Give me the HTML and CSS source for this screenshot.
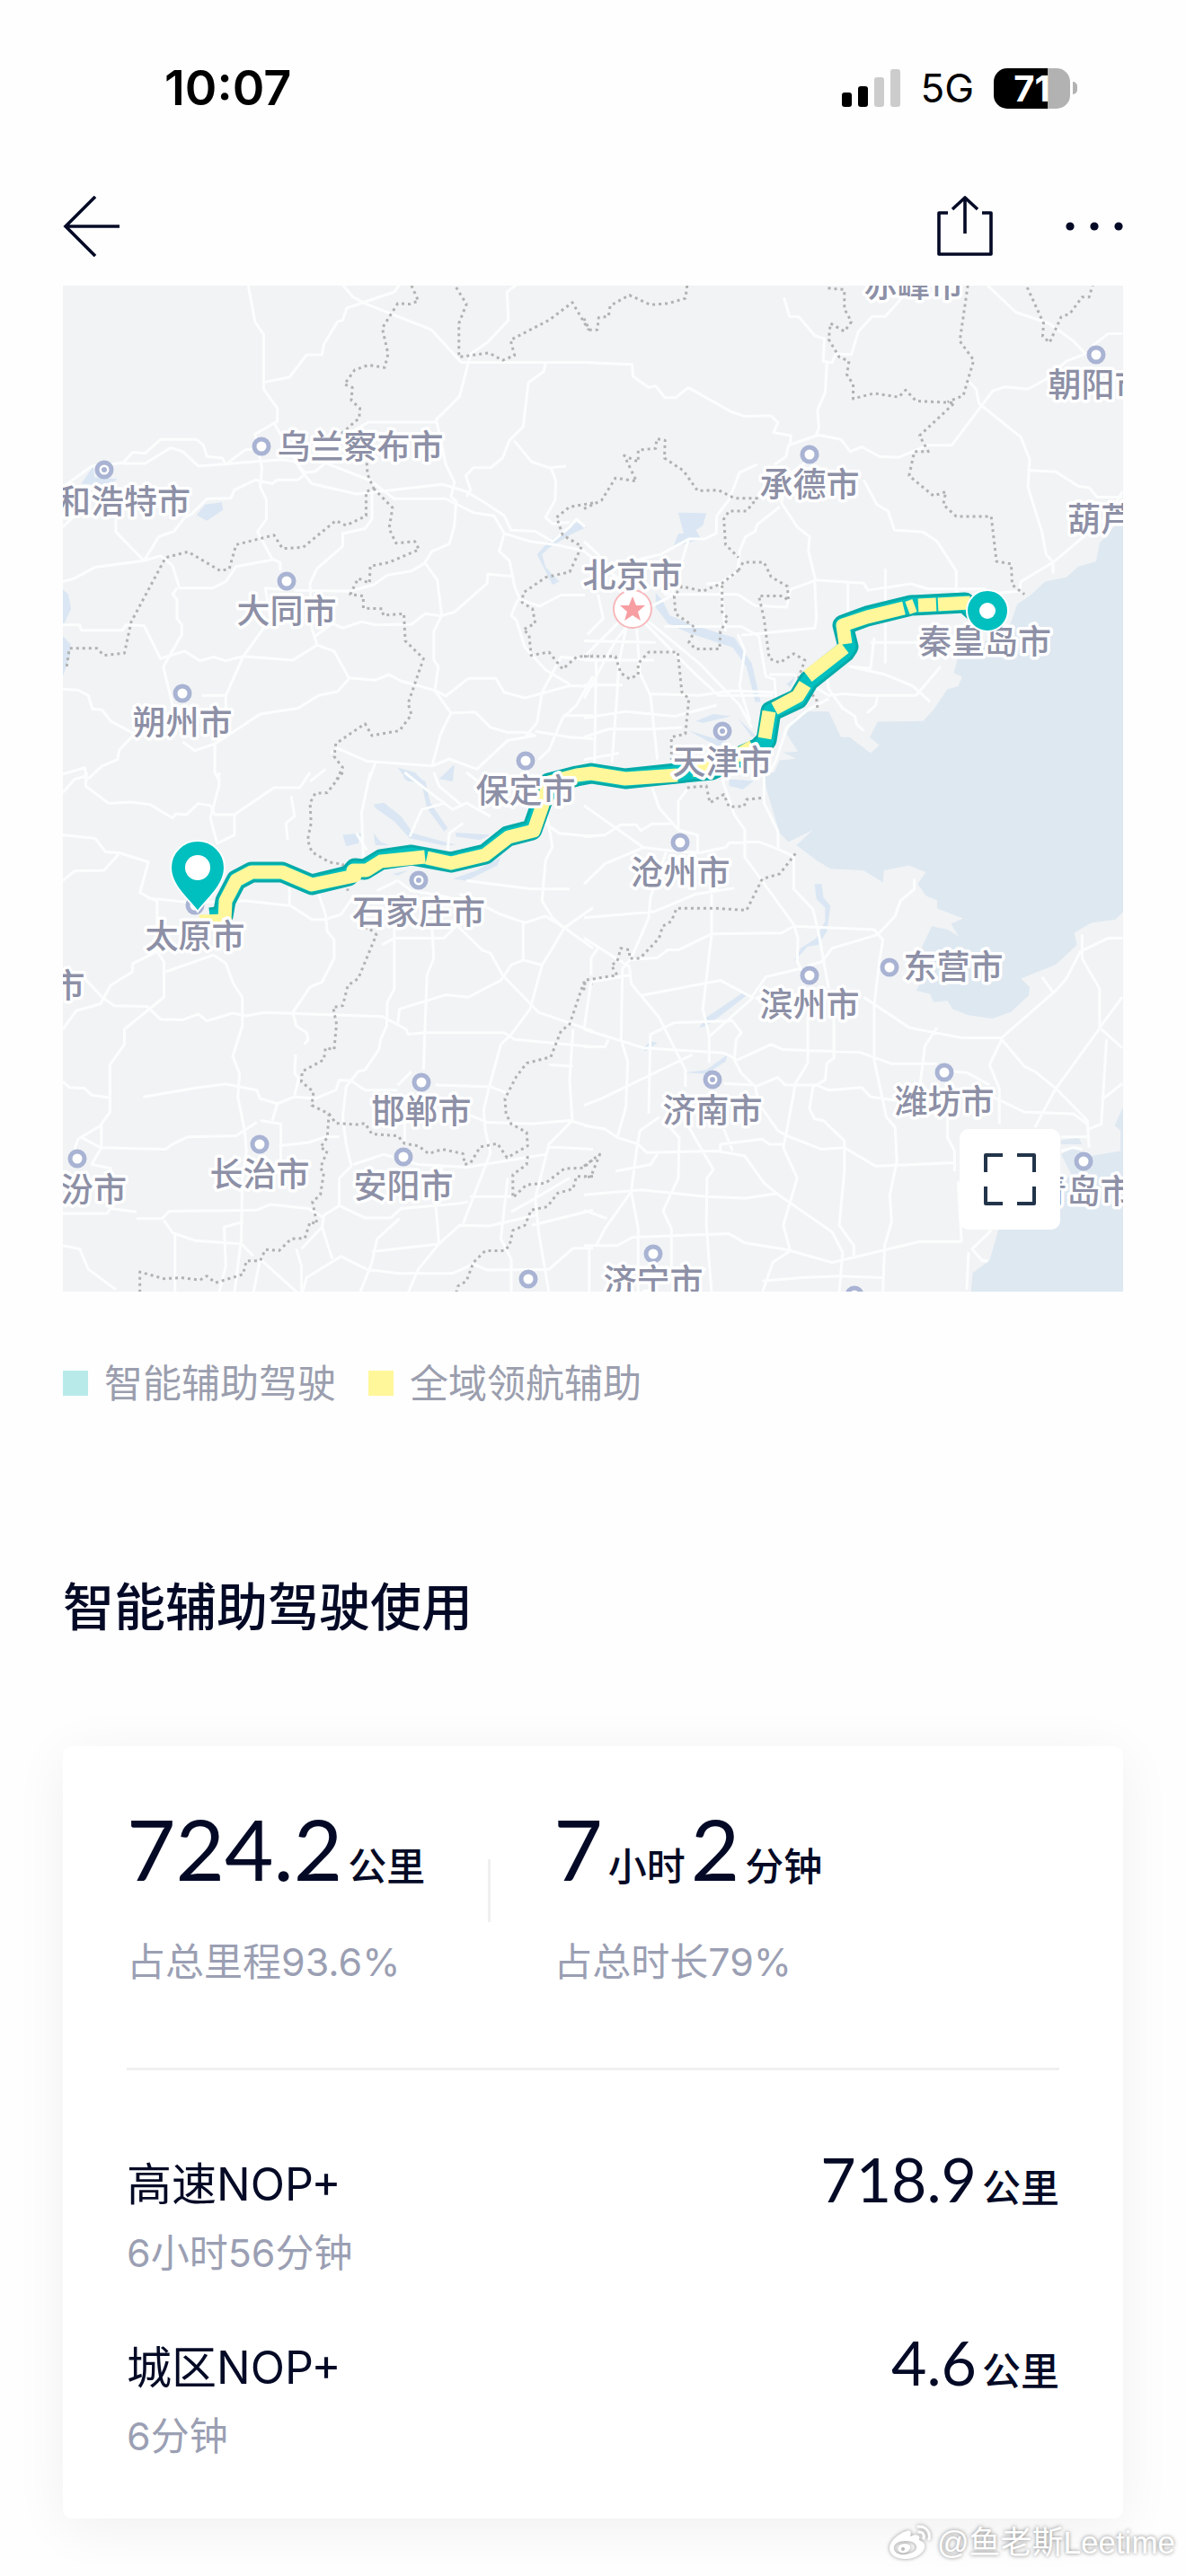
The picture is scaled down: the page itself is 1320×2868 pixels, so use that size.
FILE: index.html
```
<!DOCTYPE html>
<html lang="zh-CN">
<head>
  <meta charset="UTF-8" />
  <meta name="viewport" content="width=device-width, initial-scale=1.0"/>
  <title>智能辅助驾驶使用</title>
  <link rel="stylesheet" href="styles.css">
</head>
<body>
  <div class="status-bar">
    <span class="time">10:07</span>
    <div class="status-icons">
      <svg class="signal" width="65" height="42" viewBox="0 0 65 42">
        <rect x="0" y="26" width="11" height="16" rx="3"/>
        <rect x="18" y="19" width="11" height="23" rx="3"/>
        <rect x="36" y="9" width="11" height="33" rx="3" fill="#ccc"/>
        <rect x="54" y="0" width="11" height="42" rx="3" fill="#ccc"/>
      </svg>
      <span class="network">5G</span>
      <div class="battery">
        <span class="battery-body">71</span>
        <span class="battery-nub"></span>
      </div>
    </div>
  </div>

  <header class="nav">
    <button type="button" class="icon-btn" aria-label="返回">
      <svg width="64" height="68" viewBox="0 0 64 68" fill="none" stroke="#040a26" stroke-width="3.6">
        <path d="M36 1 L3 34 L36 67 M3 34 H63"/>
      </svg>
    </button>
    <div class="nav-right">
      <button type="button" class="icon-btn" aria-label="分享">
        <svg width="62" height="68" viewBox="0 0 62 68" fill="none" stroke="#040a26" stroke-width="3.6" stroke-linejoin="round">
          <path d="M12 19 H2 V65 H60 V19 H50"/>
          <path d="M31 42 V2 M17 15 L31 2 L45 15"/>
        </svg>
      </button>
      <button type="button" class="icon-btn" aria-label="更多">
        <svg width="64" height="68" viewBox="0 0 64 68" fill="#040a26">
          <circle cx="5" cy="34" r="4.6"/>
          <circle cx="32" cy="34" r="4.6"/>
          <circle cx="59" cy="34" r="4.6"/>
        </svg>
      </button>
    </div>
  </header>

  <main class="container">
    <div class="map">
      <svg class="map-canvas" viewBox="0 0 1180 1120" role="img" aria-label="太原市到秦皇岛市的行程地图">
        <!-- north-west tile -->
        <g transform="translate(-10 -8) scale(.38265 .35714)">
          <path class="water" d="M80 640 L105 600 L115 585 L118 620 L185 625 L160 645 Z M415 738 L440 705 L488 698 L492 722 L445 755 Z M26 970 L42 985 L50 1030 L30 1075 L22 1075 Z M22 1110 L48 1140 L46 1180 L26 1240 Z M1520 760 L1550 775 L1500 800 L1440 840 L1420 860 L1430 900 L1470 945 L1450 955 L1405 860 L1440 820 Z M1000 1525 L1050 1540 L1075 1568 L1030 1568 Z M1165 1515 L1160 1568 L1120 1560 Z"/>
          <path class="road" d="M565 20 L585 135 L610 175 V345 L650 405 V445 L585 485 L605 590 L600 650 L618 690 V750 L592 790 L635 875 L658 885 V910 M640 450 L720 600 L750 640 L880 672 L940 665 L1130 642 L1200 665 L1255 700 L1310 740 L1330 785 L1400 788 L1450 820 L1500 775 L1520 750 L1545 775"/>
          <path class="road" d="M612 323 L685 308 L735 238 L780 237 L785 205 L825 135 L840 130 L852 92 L900 75 L990 42 L1005 20 M840 20 L870 58 L905 78 L1098 160 L1185 262 H1568 M1345 20 L1318 42 L1322 130 L1260 200 L1212 235 L1180 368 L1112 440 L1140 580 L1165 635 L1155 680 L1170 695 L1165 770 L1150 828 L1100 850 L1078 888 L1040 912 L970 925 L930 955 L862 975 L700 972"/>
          <path class="road" d="M830 500 L915 448 H1112 M1430 265 L1425 290 L1380 325 L1365 462 L1325 505 L1305 560 L1270 590 H1220 L1198 615 L1212 660 L1200 680 M1338 505 L1390 572 L1440 590 L1490 585 M1445 590 L1460 630 L1458 690 L1430 745 L1450 765 L1500 760"/>
          <path class="road" d="M26 650 L110 585 L200 575 L230 542 L265 545 L310 502 H415 L435 520 L445 555 L490 560 L500 580 L555 535 L590 530 M200 577 H265 L340 528 L375 540 L420 585 L660 565 L700 570 L730 605 L760 602 L790 575 L920 630 L990 687 H1140 L1220 730 L1280 740 L1310 795 L1385 820 L1460 830 L1545 850"/>
          <path class="road" d="M735 605 L710 628 H650 L635 640 L585 628 L525 660 L515 685 L445 687 L400 735 L380 745 L350 788 L305 805 L262 880 L180 790 V750 M26 775 L60 740 M26 945 L60 935 L120 900 L262 880 L310 865 L345 895 L365 965 H462 L500 945 L530 898 L635 877 M358 965 L345 985 L358 1000 V1060 L372 1080 V1110 L318 1210 L345 1330 M26 1080 L75 1080 L80 1097 H200 L210 1080 L262 1082 L310 1185 L380 1162 L425 1192 L465 1180 L500 1192 L550 1178 L695 1190 L765 1143 L815 1162 L858 1245 L935 1252 L975 1235 L1010 1255 L1110 1285 L1140 1302 L1205 1247 H1285 L1310 1290 L1370 1308 L1500 1270 L1568 1272"/>
          <path class="road" d="M925 668 V750 L905 780 L840 795 V835 L765 905 L745 950 L750 1090 L765 1140 M760 1115 L810 1075 L840 1090 L895 1070 L935 1080 L1040 1078 L1080 1045 L1125 1052 L1165 1040 L1260 950 L1262 922 L1330 928 M1080 888 L1115 940 L1128 1050 L1105 1100 V1190 L1118 1210 L1108 1285 L1155 1355 L1125 1420 L1100 1520 M1310 795 L1295 850 L1325 880 L1340 960 L1355 1000 L1412 1022 L1475 987 H1545 M1350 1000 L1330 1050 L1345 1065 L1370 1150 L1430 1220 L1500 1265 M550 1180 L500 1300 V1340 M430 1300 H500 M670 970 L615 965 L630 1060 L550 1180 M26 1280 L70 1283 L100 1300 L112 1342 L140 1345 L165 1380 L235 1420 L190 1470 L185 1500 L140 1520 L100 1560 M858 1248 L825 1288 L770 1300 L710 1340 L600 1358 L470 1450 L410 1472 L375 1445 M468 1450 V1540 L482 1568 M26 1545 L90 1525 L95 1568 M805 1480 L825 1465 L910 1505 L1100 1520 L1150 1498 L1230 1530 L1320 1440 L1400 1425 L1370 1415 L1320 1415 L1270 1400 L1225 1352 L1155 1355 M1568 1190 L1475 1180 L1420 1290 L1405 1385 L1370 1430 M1568 1240 L1520 1330 L1480 1370 L1440 1470 L1410 1500 M1480 1363 H1568 M1400 1412 L1500 1430 L1568 1435 M935 1510 L915 1568 M790 1530 L745 1568"/>
          <path class="border" d="M1040 22 L1060 70 L1035 80 L1000 78 L955 155 L972 235 L962 278 L915 270 L875 285 L845 330 L868 340 L865 380 L890 405 L888 435 L830 490 M910 575 L912 610 L930 655 L908 665 V740 L850 770 L820 755 L725 838 L665 842 L640 800 L530 830 L510 905 L485 912 L390 852 L325 870 L225 1070 L205 1168 L145 1175 L125 1153 H45 L36 1220"/>
          <path class="border" d="M930 655 L985 715 L975 780 L995 825 L1050 820 L1062 845 L975 885 L920 897 L918 950 L885 935 L862 985 L900 990 V1028 L955 1030 L958 1050 L1018 1045 L1022 1130 L1075 1185 L1030 1325 L1040 1360 L1005 1410 L925 1425 L905 1388 L820 1450 L815 1490 L840 1525 L820 1568"/>
          <path class="border" d="M1170 28 L1200 80 L1178 140 V245 L1265 232 L1305 255 L1340 240 L1328 192 L1440 130 L1508 75 L1555 160 M1568 700 L1500 712 L1462 745 L1480 800 L1535 835 L1500 915 L1430 932 L1365 980 L1362 1010 L1392 1030 L1400 1075 L1365 1095 L1382 1110 L1388 1175 L1440 1165 L1480 1218 L1520 1180 L1568 1175"/>
        </g>

        <!-- north-east tile -->
        <g transform="translate(580 -8) scale(.38903 .35714)">
          <path class="sea" d="M1568 770 H1520 L1475 825 L1465 882 L1415 898 L1380 932 L1320 945 L1275 990 L1240 1015 L1215 1090 L1070 1180 L1058 1230 L1082 1242 L1070 1272 L1040 1280 L1000 1345 L970 1380 L840 1382 L818 1430 L845 1455 L820 1480 L760 1430 L735 1430 L700 1350 L640 1350 L600 1372 L580 1420 L612 1475 L570 1478 L608 1497 L560 1502 L540 1550 L515 1568 H1568 Z"/>
          <path class="water" d="M270 730 L350 732 L340 770 L320 785 L335 812 L255 838 L270 795 L285 795 Z M205 980 L225 1005 L245 1050 L310 1080 L430 1120 L480 1200 L505 1320 L490 1320 L465 1210 L425 1150 L300 1105 L240 1075 L205 1025 Z M320 1380 L370 1358 L420 1365 L340 1385 Z M300 1410 L420 1450 L380 1458 Z M440 1370 L490 1425 L480 1430 Z M580 1265 L605 1240 L590 1275 Z"/>
          <path class="road" d="M572 60 L588 118 L615 120 L660 178 L688 188 L684 260 H695 L690 355 L668 410 L672 465 L662 495 M910 60 L862 118 H825 L785 165 L765 237 L720 235 L710 262 H690 M0 262 L138 268 L140 305 L185 340 L205 335 L232 372 H262 L298 340 L420 415 L460 430 L535 428 L555 450 L542 480 L592 490 L590 515 M545 580 L578 555 L585 520 L670 488 L735 502 L762 540 L795 525 L845 555 L898 558 L985 520 H1052 L1135 400 L1170 350 L1205 338 L1270 345 L1320 315 L1380 258 L1435 235 L1400 195 L1330 140 L1235 105 L1155 22 M1455 210 L1500 172 H1540 M1100 320 L1122 345 L1130 390 L1250 495 L1275 565 L1270 650 L1310 790 L1322 860 L1342 885 V920 M1268 598 L1350 603 L1415 648 L1445 652 L1468 682 H1540 M1540 665 L1500 740 L1342 885 L1250 945 L1245 975 L1090 990"/>
          <path class="road" d="M640 570 L580 615 L565 700 L610 775 L645 805 L642 850 L662 940 L800 950 L812 972 L935 952 L985 968 H1150 M800 628 L838 705 L870 725 L888 785 L970 790 L1010 820 L1065 912 V975 L1085 990 M560 712 L495 768 L490 788 L462 805 L445 850 L440 912 L390 950 L350 952 M495 580 L445 605 L415 690 L380 740 L378 795 L345 812 H300 L220 860 L160 875 L110 900 M660 942 L590 970 L580 1025 L490 1020 L440 985 H230 M660 945 L665 1060 L660 1090 L450 1112 M755 945 V1040 M862 905 V1200 M0 850 L80 920 L130 960 M0 820 L40 860 L70 905"/>
          <path class="road" d="M140 1060 L90 1130 L0 1310 M150 1080 L160 1230 L190 1300 L210 1500 M120 1090 L100 1200 L95 1290 L80 1510 M170 1070 L260 1170 L320 1235 L385 1300 H540 M185 1070 L330 1200 L445 1330 L480 1400 M110 1060 L0 1180 M0 1130 L205 1135 M0 1190 H200 M0 1268 H110 M190 1295 L330 1300 L420 1285 L545 1290 M440 1110 L460 1160 L445 1270 L475 1380 M0 1370 L120 1350 L260 1365 L380 1330 M0 1430 L70 1405 H190 L280 1400 M0 1500 L100 1480 M35 1190 L30 1520 M230 1085 L450 1085 L500 1115 L520 1240 L545 1250 L550 1320 M530 1235 H600 L700 1300 L740 1295 L800 1300 H950 L1020 1210 M830 1120 L820 1215 L760 1210 L862 1235 L940 1270 L990 1320 M820 1135 H960 M690 1200 L700 1280 L740 1340 L775 1365 L780 1390 L800 1410 M840 1300 L835 1330 L810 1355 M700 1310 L640 1345 L580 1400 L550 1500 L520 1568 M390 950 L405 1100 M40 985 L55 1060 L10 1110 M300 810 L250 990 L160 1040"/>
          <path class="border" d="M295 22 L290 62 L240 78 L190 82 L130 52 L75 85 L70 118 L42 122 L38 160 L15 160 L0 125 M698 30 L745 35 L745 95 L765 135 L745 165 L705 140 L700 190 L730 245 L758 258 L752 300 L770 330 V375 L830 358 L900 370 L920 348 L950 382 L1060 388 L960 490 L985 540 H945 L930 615 L1000 678 L1035 665 L1028 705 L1065 742 H1165 L1180 882 L1222 890 L1225 955 L1260 985 M1098 22 L1075 195 L1115 255 L1085 365 L1040 385 M1268 28 L1315 140 L1312 180 L1332 200 L1365 120 L1390 110 L1425 58 H1445 L1455 22"/>
          <path class="border" d="M0 718 L50 692 L90 622 L150 632 L115 552 L155 572 V535 L205 530 L208 500 L232 505 L230 560 L285 600 L325 662 L385 660 L430 685 H495 L465 725 H415 L400 750 L405 830 L442 870 M442 910 L455 885 H515 L535 930 L582 960 L585 1005 L570 990 H500 L515 1060 L530 1185 L560 1198 L600 1170 L632 1190 L610 1255 L665 1310 L668 1340 M442 910 L395 950 L340 975 L280 960 L258 990 L262 1045 L320 1090 L300 1135 L320 1155 H388 L390 1100 L412 1060 L395 1040 V950 M0 1178 H90 L105 1230 L130 1248 L155 1235 L155 1200 L185 1165 H268 L280 1290 L300 1310 L290 1420 L250 1430 V1500"/>
        </g>

        <!-- south-west tile -->
        <g transform="translate(-10 542) scale(.38265 .37628)">
          <path class="water" d="M1015 0 L1080 25 L1095 90 L1145 165 L1135 175 L1085 105 L1070 35 L1020 20 Z M930 95 L960 90 L1010 130 L1045 180 L1170 215 L1130 215 L1035 195 L990 145 L935 105 Z M840 185 L895 180 L885 210 L850 218 Z M930 180 L950 205 L975 215 L935 215 Z M1168 178 L1268 185 L1240 200 L1170 190 Z M1160 315 L1230 290 L1300 250 L1290 275 L1200 320 Z M985 300 L1030 290 L1000 305 Z"/>
          <path class="road" d="M95 0 L92 40 L160 92 L225 88 L280 95 L345 135 L355 122 L385 125 L420 92 L455 98 L468 125 H525 L640 45 H715 L745 0 M480 0 V40 L455 135 L475 210 L525 185 V128 M26 60 L60 20 L95 10 M26 185 L120 195 L150 235 L190 238 L275 265 L250 355 L275 370 L300 380 V530 L320 560 V665 L205 760 V805 L163 865 V1005 L135 1045 L70 1085 L60 1115 M190 240 L145 290 L60 292 L26 320 M275 372 L400 385 L560 380 L690 395 L750 435 H790 L835 420 L870 370"/>
          <path class="road" d="M465 540 L325 590 M465 540 L500 565 L522 625 L548 665 V750 L520 840 L540 890 L535 960 L555 1060 L560 1120 L548 1200 L545 1380 L525 1540 M765 345 L790 420 L795 470 L815 495 V550 L780 620 L745 635 L695 710 L705 750 L735 770 L740 790 L728 805 M300 530 L230 565 L228 590 L165 630 L135 685 L65 705 L26 760 M90 610 L140 665 L175 690 L270 692 L310 730 L375 732 L420 715 L445 735 L520 712 L560 720 L610 710 L840 718 L955 722 L1025 760 L1030 775 L1080 770 H1310 L1340 790 L1568 812 M26 915 L45 932 L90 935 L110 955 L160 962 M260 960 L420 932 L500 922 L590 940 L600 965 L650 980 L700 960 L760 965 L820 940 L830 910 L865 912 L905 940 H1000 M703 835 L700 890 L712 905 L700 955 M650 980 L635 1030 M600 1030 L660 1040 V1150"/>
          <path class="road" d="M80 1080 L135 1110 L325 1115 L345 1100 L390 1078 L530 1075 L590 1035 M138 1040 V1110 L110 1160 L168 1172 M655 1105 L740 1095 L790 1078 H830 M26 1305 H155 L165 1290 L240 1300 M240 1320 H315 L335 1298 L590 1295 L630 1278 L740 1290 L780 1315 M320 1325 L345 1362 L410 1385 L545 1395 L580 1430 M352 1365 V1540 M26 1400 L75 1410 L100 1470 L180 1530 M550 1330 L495 1345 L500 1460 L480 1540 M580 1540 L600 1440 L720 1550 L735 1495 L835 1432 L910 1470 L1000 1482 H1160 L1220 1455 L1260 1472 L1440 1470 L1510 1408 H1568 M705 1410 L720 1460 V1540 M720 1410 L780 1345 L785 1310 L830 1282 L905 1318 L980 1318 L1010 1290 L1180 1275 L1205 1270 M780 1345 L810 1440 M1005 1320 L940 1380 L925 1450 L890 1540 M1120 1395 L1180 1340 L1265 1342 L1400 1310 M925 1418 L1120 1395 L1060 1470 L1030 1540"/>
          <path class="road" d="M990 440 V640 L970 680 L968 750 L950 790 L945 820 L905 880 L885 885 L850 930 L840 1020 L850 1100 L865 1165 L830 1200 V1280 M1100 460 L1105 550 L1085 600 L1075 880 M955 510 L990 490 H1135 L1175 450 M1160 440 L1245 525 L1270 535 L1305 600 L1410 710 L1568 765 M1180 360 L1300 420 L1370 445 L1430 425 L1485 460 L1568 400 M1485 460 L1568 520 M1365 445 V555 L1420 570 M1365 555 L1330 570 L1300 615 L1205 665 L1140 658 L1005 700 L1000 745 M1500 345 L1390 345 L1200 320 M1430 100 L1450 220 L1430 260 L1420 380 L1450 430 L1485 460 L1420 570 L1385 700 L1330 775 L1300 805 L1265 935 L1250 1000 L1255 1060 L1270 1125 L1190 1335 M1110 925 L1270 930 L1320 950 M1200 1010 L1260 1035 L1390 1040 L1500 1030 L1568 1050 M1510 760 L1500 910 L1508 1030 L1440 1100 L1400 1260 L1410 1360 L1440 1540 M1440 865 L1510 870 M1000 925 L1040 885 M870 1160 L960 1130 L1060 1160 L1200 1168 L1430 1130 M1440 1108 L1568 1115 M1210 1255 H1330 M1320 1200 L1300 1380 L1330 1440 V1540 M1500 1200 L1400 1260 L1330 1300 M1390 1340 L1568 1295 M685 395 V340 M680 200 L675 150 L700 130 L690 70 M900 250 L895 120 L920 0 M880 180 L910 230"/>
          <path class="road" d="M1020 1000 V1090 M1020 0 L1095 60 L1160 110 L1200 90 L1270 130 M1105 0 L1120 40 L1190 100 M1200 0 L1250 40 M1035 190 L1070 110 L1140 90 M1400 130 L1470 180 L1568 190 M1000 320 L1040 350 L1100 360 L1150 370 M940 350 L1000 320 M1130 1160 L1110 1270 L1120 1395 M1145 230 L1150 180 L1190 150"/>
          <path class="border" d="M840 0 L795 60 L760 62 L745 90 L748 150 L738 200 L750 235 L800 265 L840 272 L855 350 M885 462 L915 460 L938 480 L885 610 L855 630 L840 690 L812 695 L822 745 L815 820 L790 815 L785 850 L722 885 L720 915 L755 945 L750 985 L800 1010 L795 1080 L775 1110 L795 1120 L775 1170 L785 1185 L775 1250 L752 1270 L765 1335 L745 1330 L730 1378 L690 1380 L655 1415 L615 1412 L600 1445 H560 L550 1485 L470 1510 L445 1490 L425 1502 L370 1495 L320 1498 L250 1478 V1540"/>
          <path class="border" d="M800 1010 L820 1038 L880 1042 L905 1038 L925 1070 L1000 1075 L1020 1098 L1060 1105 L1090 1128 L1130 1115 L1190 1128 L1195 1160 L1212 1155 L1240 1108 L1290 1098 L1318 1140 L1378 1105 L1375 1065 L1330 1040 L1315 1010 L1312 965 L1345 900 L1375 860 L1445 842 L1475 765 L1500 745 L1540 625 H1568 M1378 1135 L1375 1160 L1335 1190 V1258 L1375 1220 L1430 1215 L1485 1172 L1540 1170 L1568 1145 M1568 1195 H1520 L1510 1232 L1465 1245 L1435 1285 L1388 1295 L1370 1340 L1335 1355 L1325 1400 L1310 1415 H1255 L1220 1450 L1200 1505 L1175 1520 L1170 1540"/>
        </g>

        <!-- south-east tile -->
        <g transform="translate(580 542) scale(.38903 .37628)">
          <path class="sea" d="M515 0 L522 50 L560 180 L585 205 L655 170 L608 215 L665 260 L705 285 L800 290 L855 325 L858 290 L930 275 L978 295 L955 330 L978 365 L1010 378 L1010 402 L1085 432 L1050 448 L1072 485 L1040 465 L995 455 L965 520 L975 600 L950 645 L990 655 L1000 680 L1040 675 L1055 700 L1100 718 L1168 728 L1222 708 L1272 660 L1275 635 L1250 610 L1350 568 L1410 510 L1402 475 L1450 445 L1520 435 L1545 410 H1568 V0 Z M1540 995 L1518 1045 L1535 1060 V1120 L1450 1135 L1400 1110 L1365 1130 L1395 1190 L1290 1280 L1185 1355 L1160 1445 L1112 1480 L1105 1568 H1568 V995 Z M1365 1088 L1415 1080 L1425 1100 L1365 1100 Z"/>
          <path class="water" d="M660 330 L680 330 L685 370 L705 395 L695 470 L670 510 L640 515 L600 560 L620 520 L665 490 L690 440 L690 400 L665 375 Z M330 755 L350 725 L460 648 L465 660 L390 720 L350 750 Z M170 815 L190 795 L210 800 L175 825 Z M290 888 L350 880 L410 835 L405 855 L350 892 Z M415 20 L485 25 L455 50 L415 40 Z"/>
          <path class="road" d="M195 45 L215 105 L270 170 L325 185 V240 M270 170 V85 L295 50 M0 190 L60 185 L105 155 H150 L162 172 L195 152 H250 M0 98 L170 222 L235 230 L330 238 L405 222 L415 208 L500 205 L550 225 L600 248 V345 L655 405 L672 480 L700 640 M170 222 L60 270 L0 330 M235 235 L190 370 L185 430 L135 550 L110 580 L106 790 L125 855 L120 990 L95 1080 M395 20 L430 125 L460 170 V250 L600 450 L612 490 L610 560 L640 620 M515 0 V90 L555 175 V225 M0 430 L200 412 L320 360 L430 342 M365 345 V480 L340 700 L358 780 V860 M130 555 L210 548 L240 525 L270 525 L365 478 L565 475 L600 455 L830 465 L855 495 L845 560 L830 690 V850 L865 1020 L890 1050 L895 1150 L875 1250 L880 1330 L860 1400 L855 1540 M945 315 V345 L905 380 L890 425 L840 480 L710 520 L680 560 L640 572 M0 490 L130 575 L135 625 L215 725 L290 880 L290 930"/>
          <path class="road" d="M165 660 L390 615 L435 640 L480 665 L520 605 L620 580 M485 665 L360 780 M550 635 L490 670 M0 760 L170 815 L400 830 L440 850 L535 805 L570 820 L790 828 L880 862 H1010 M0 812 H60 L70 790 M0 985 L50 965 L190 895 L310 835 M185 1010 L190 775 L260 740 L425 735 L450 770 L435 790 L430 850 L450 890 L490 930 L500 980 L555 1060 L580 1075 L680 1115 L745 1110 L835 1165 L1060 1155 M640 725 V860 L605 920 L580 1060 L570 1110 L610 1200 L570 1340 L590 1415 L540 1450 L510 1540 M715 730 V845 L695 860 L690 910 L655 930 L645 995 L660 1025 L685 1030 L745 1090 V1180 L730 1340 L772 1400 V1430 M490 930 L555 902 L575 925 L665 925 L700 940 L795 932 L820 960 L890 970 M800 665 L930 755 L1080 785 H1195 L1350 645 L1380 610 L1420 530 L1500 490 H1540 M1425 480 V550 L1475 640 V755 L1540 665 M1310 605 L1345 655 M1195 790 L1160 865 L1188 935 V1040 M1195 790 L1260 870 L1290 885 L1350 935 L1440 1030 L1445 1110 M1475 758 L1350 935 L1290 1050 M1480 760 L1540 815 M1495 790 L1480 1040 L1445 1055 M1540 920 L1480 970 M1010 755 L975 810 L962 920 L1000 960 M1055 885 L1095 888 L1160 925 M1170 960 L1260 1005 L1400 1010 L1440 1040 M1040 1020 V1080 L1060 1120 V1180"/>
          <path class="road" d="M0 1045 L60 1055 L95 1080 L155 1100 L180 1125 L380 1120 L460 1135 L515 1215 L550 1245 L710 1360 L740 1420 L730 1540 M390 1120 V1100 L510 1085 L530 1100 H575 M215 1020 L160 1060 L150 1120 L135 1240 L60 1350 L35 1400 M135 1240 L155 1350 V1540 M0 1250 L165 1235 L350 1255 L460 1260 L555 1245 M300 1050 L370 1175 L352 1200 L350 1340 L365 1540 M0 1295 L65 1320 M0 1400 H95 L140 1375 L415 1365 L460 1392 L580 1412 L710 1450 L960 1388 H1080 L1070 1210 M225 1295 L250 1350 V1480 L350 1470 M245 1050 L272 1080 L270 1200 L225 1300 M90 1180 L190 1160 L210 1130 M1165 1355 L1110 1410 L1140 1445 H1155 M1100 1420 L1095 1530 M510 1505 L620 1495 L730 1490 L855 1495 M15 1400 V1540 M400 920 L480 925 M240 1490 L300 1530 M400 1055 L425 1120 M20 620 L130 600 M20 600 V550 L40 520 M0 760 L20 620 M1365 1120 L1400 1110 L1425 1115 M1365 1078 H1445"/>
          <path class="border" d="M295 45 L350 40 L360 90 L400 65 L415 102 L458 100 L465 80 L515 75 M605 240 L560 300 L510 315 L465 408 L380 402 H265 L250 440 L225 455 L215 490 L160 550 L130 550 V525 L105 520 L95 560 L78 570 L95 600 L0 615 V655 M0 1165 L45 1130 L20 1195 L0 1200"/>
        </g>

        <!-- driven route -->
        <g fill="none" stroke-linejoin="round">
          <path stroke="#05aaa8" stroke-width="23" d="M164 704 L178 702 L181 685 L193 662 L210 653 L244 653 L277 667 L318 657 L325 649 L336 650 L354 639 L388 634 L432 642 L470 633 L495 613 L522 606 L532 578 L541 554 L572 546 L588 543 L626 549 L673 544 L722 539 L774 515 L783 506 L788 474 L818 460 L830 440 L870 408 L874 402 L868 378 L895 368 L944 356 L1004 353 L1016 364"/>
          <path stroke="#00bfbf" stroke-width="17" d="M164 704 L178 702 L181 685 L193 662 L210 653 L244 653 L277 667 L318 657 L325 649 L336 650 L354 639 L388 634 L432 642 L470 633 L495 613 L522 606 L532 578 L541 554 L572 546 L588 543 L626 549 L673 544 L722 539 L774 515 L783 506 L788 474 L818 460 L830 440 L870 408 L874 402 L868 378 L895 368 L944 356 L1004 353 L1016 364"/>
          <path class="nop" d="M152 708 L180 707 L181 685 L193 662 L210 653 L244 653 L277 667 L325 657 L323 651 L338 651 L354 641 L403 636 M405 637 L432 643 L470 634 L496 614 L524 607 L534 578 L541 553 L572 545 L588 543 L626 549 L684 545 M700 540 L735 532 L768 513 M781 504 L786 474 M792 471 L818 457 L826 444 M829 435 L870 403 M871 399 L868 378 L895 369 L936 359 M940 359 L948 356 M952 356 L972 355 M974 355 L1010 353"/>
        </g>

        <!-- cities -->
        <g class="dots">
          <circle cx="221" cy="179" r="8"/><circle cx="46" cy="205" r="8"/><circle cx="249" cy="329" r="8"/>
          <circle cx="133" cy="454" r="8"/><circle cx="515" cy="529" r="8"/><circle cx="1150" cy="77" r="8"/>
          <circle cx="831" cy="188" r="8"/><circle cx="734" cy="496" r="8"/><circle cx="147" cy="690" r="8"/>
          <circle cx="396" cy="662" r="8"/><circle cx="219" cy="956" r="8"/><circle cx="16" cy="972" r="8"/>
          <circle cx="399" cy="887" r="8"/><circle cx="379" cy="970" r="8"/><circle cx="518" cy="1106" r="8"/>
          <circle cx="687" cy="620" r="8"/><circle cx="920" cy="759" r="8"/><circle cx="831" cy="768" r="8"/>
          <circle cx="723" cy="884" r="8"/><circle cx="981" cy="876" r="8"/><circle cx="1136" cy="975" r="8"/>
          <circle cx="657" cy="1078" r="8"/><circle cx="881" cy="1124" r="8"/>
        </g>
        <g fill="#a9b3d3">
          <circle cx="46" cy="205" r="3"/><circle cx="734" cy="496" r="3"/><circle cx="396" cy="662" r="3"/><circle cx="723" cy="884" r="3"/>
        </g>
        <circle cx="634" cy="360" r="21" fill="#fff" stroke="#f8b8bb" stroke-width="2"/>
        <path fill="#f79ea2" d="M634 346 L638 356 L648 356 L640 363 L643 373 L634 367 L625 373 L628 363 L620 356 L630 356 Z"/>
        <g class="labels">
          <text x="331" y="193">乌兰察布市</text>
          <text x="68" y="254">和浩特市</text>
          <text x="249" y="376">大同市</text>
          <text x="133" y="500">朔州市</text>
          <text x="515" y="576">保定市</text>
          <text x="947" y="13">赤峰市</text>
          <text x="1152" y="124">朝阳市</text>
          <text x="1192" y="274">葫芦岛市</text>
          <text x="831" y="235">承德市</text>
          <text x="634" y="336">北京市</text>
          <text x="1026" y="410">秦皇岛市</text>
          <text x="734" y="544">天津市</text>
          <text x="147" y="738">太原市</text>
          <text x="396" y="711">石家庄市</text>
          <text x="6" y="793">市</text>
          <text x="219" y="1003">长治市</text>
          <text x="34" y="1020">汾市</text>
          <text x="399" y="933">邯郸市</text>
          <text x="379" y="1016">安阳市</text>
          <text x="687" y="667">沧州市</text>
          <text x="991" y="772">东营市</text>
          <text x="831" y="814">滨州市</text>
          <text x="723" y="932">济南市</text>
          <text x="981" y="922">潍坊市</text>
          <text x="1136" y="1022">青岛市</text>
          <text x="657" y="1122">济宁市</text>
        </g>

        <!-- start and end of the trip -->
        <path fill="#00bfbf" stroke="#fff" stroke-width="2" d="M150 697 C142 685 120 669 120 648 A30 30 0 0 1 180 648 C180 669 158 685 150 697 Z"/>
        <circle cx="150" cy="648" r="14" fill="#fff"/>
        <circle cx="1029" cy="362" r="23" fill="#00bfbf" stroke="#fff" stroke-width="2"/>
        <circle cx="1029" cy="362" r="9" fill="#fff"/>
      </svg>
      <button type="button" class="expand-btn" aria-label="全屏">
        <svg width="58" height="58" viewBox="0 0 58 58" fill="none" stroke="#22344a" stroke-width="4" stroke-linejoin="round">
          <path d="M21 2 H2 V21 M37 2 H56 V21 M56 37 V56 H37 M21 56 H2 V37"/>
        </svg>
      </button>
    </div>

    <ul class="legend">
      <li><span class="swatch"></span>智能辅助驾驶</li>
      <li><span class="swatch yellow"></span>全域领航辅助</li>
    </ul>

    <h2>智能辅助驾驶使用</h2>

    <section class="card">
      <div class="stats">
        <div class="stat">
          <p class="value"><span class="num">724.2</span><span class="unit">公里</span></p>
          <p class="sub">占总里程93.6%</p>
        </div>
        <div class="stat-line"></div>
        <div class="stat">
          <p class="value"><span class="num">7</span><span class="unit">小时</span><span class="num">2</span><span class="unit">分钟</span></p>
          <p class="sub">占总时长79%</p>
        </div>
      </div>
      <div class="row">
        <div>
          <h3>高速NOP+</h3>
          <p class="sub">6小时56分钟</p>
        </div>
        <p class="value small"><span class="num">718.9</span><span class="unit">公里</span></p>
      </div>
      <div class="row">
        <div>
          <h3>城区NOP+</h3>
          <p class="sub">6分钟</p>
        </div>
        <p class="value small"><span class="num">4.6</span><span class="unit">公里</span></p>
      </div>
    </section>
  </main>

  <div class="watermark">
    <svg width="48" height="40" viewBox="0 0 48 40">
      <path fill="#fff" fill-rule="evenodd" d="M20 7 C26 5 25 11 24 13 C30 10 36 11 34 17 C40 19 41 23 40 26 C37 34 28 38 18 38 C8 38 1 33 1 26 C1 18 12 9 20 7 Z M19 18 C10 18 5 22 6 27 C7 32 13 34 19 33 C27 32 32 28 31 24 C30 20 26 18 19 18 Z"/>
      <path fill="#fff" fill-rule="evenodd" d="M18 21 C12 21 9 25 11 29 C13 32 20 32 23 28 C26 24 23 21 18 21 Z M16 25 A2 2 0 1 0 16 29 A2 2 0 1 0 16 25 Z"/>
      <path fill="none" stroke="#fff" stroke-width="3" stroke-linecap="round" d="M33 2 C41 1 47 8 45 16 M34 8 C38 8 40 11 39 15"/>
    </svg>
    <span>@鱼老斯Leetime</span>
  </div>
</body>
</html>
```
FILE: styles.css
```
* {
  box-sizing: border-box;
}
body {
  font-family: Inter, "Noto Sans CJK SC", sans-serif;
  background: #fefefe;
  color: #040a26;
  margin: 0;
  padding: 0;
}
p, h2, h3, ul {
  margin: 0;
  padding: 0;
}
button {
  border: none;
  padding: 0;
  background: none;
  cursor: pointer;
}
svg {
  display: block;
}
.status-bar {
  display: flex;
  align-items: center;
  justify-content: space-between;
  padding: 68px 121px 0 183px;
  line-height: 60px;
  color: #000;
}
.time {
  font-size: 54px;
  font-weight: 600;
}
.status-icons {
  display: flex;
  align-items: center;
  gap: 22px;
}
.network {
  font-size: 44px;
  font-weight: 400;
}
.battery {
  display: flex;
  align-items: center;
  gap: 3px;
}
.battery-body {
  width: 85px;
  height: 45px;
  border-radius: 15px;
  background: linear-gradient(90deg, #000 71%, #b2b2b2 71%);
  color: #fff;
  font-size: 40px;
  font-weight: 700;
  line-height: 45px;
  text-align: center;
}
.battery-nub {
  width: 5px;
  height: 14px;
  border-radius: 0 5px 5px 0;
  background: #b2b2b2;
}
.nav {
  display: flex;
  align-items: center;
  justify-content: space-between;
  padding: 90px 70px 32px;
}
.nav-right {
  display: flex;
  gap: 81px;
}
.container {
  padding: 0 70px;
}
.map {
  position: relative;
  background: #f1f3f5;
}
.map-canvas {
  width: 100%;
  height: auto;
  overflow: hidden;
}
.sea {
  fill: #dee8f1;
}
.water {
  fill: #dae6f3;
}
.road, .border {
  fill: none;
  vector-effect: non-scaling-stroke;
  stroke-linejoin: round;
}
.road {
  stroke: #fcfefe;
  stroke-width: 3px;
}
.border {
  stroke: #b2b2b2;
  stroke-width: 3px;
  stroke-dasharray: 3 4;
}
.nop {
  stroke: #fff799;
  stroke-width: 15px;
}
.dots {
  fill: #fff;
  stroke: #a9b3d3;
  stroke-width: 5px;
}
.labels {
  fill: #8d90a6;
  stroke: #fff;
  stroke-width: 7px;
  stroke-linejoin: round;
  paint-order: stroke;
  font-family: "Noto Sans CJK SC", sans-serif;
  font-size: 37px;
  font-weight: 500;
  text-anchor: middle;
}
.expand-btn {
  position: absolute;
  right: 70px;
  bottom: 69px;
  width: 112px;
  height: 112px;
  display: flex;
  align-items: center;
  justify-content: center;
  border-radius: 10px;
  background: #fff;
}
.legend {
  display: flex;
  gap: 36px;
  margin-top: 72px;
  list-style: none;
  font-size: 43px;
  line-height: 60px;
  color: #9b9eae;
}
.legend li {
  display: flex;
  align-items: center;
  gap: 18px;
}
.swatch {
  width: 28px;
  height: 28px;
  background: #b9eaea;
}
.swatch.yellow {
  background: #fff799;
}
h2 {
  margin-top: 180px;
  font-size: 57px;
  font-weight: 500;
  line-height: 80px;
}
.card {
  margin-top: 114px;
  padding: 52px 71px 62px;
  border-radius: 10px;
  background: #fff;
  box-shadow: 0 10px 60px rgba(0, 0, 0, 0.06);
}
.stats {
  display: flex;
  align-items: center;
  padding-bottom: 88px;
  border-bottom: 3px solid #f0f0f0;
}
.stat-line {
  width: 3px;
  height: 70px;
  margin: 0 70px;
  background: #efefef;
}
.value {
  display: flex;
  align-items: baseline;
  gap: 6px;
  line-height: 124px;
}
.num {
  font-family: Lato, sans-serif;
  font-size: 94px;
  font-weight: 400;
}
.unit {
  font-size: 43px;
  font-weight: 500;
}
.sub {
  font-size: 43px;
  line-height: 60px;
  color: #9b9fb3;
}
.stat .sub {
  margin-top: 14px;
}
.row {
  display: flex;
  justify-content: space-between;
  margin-top: 81px;
}
.row h3 {
  font-size: 50px;
  font-weight: 400;
  line-height: 92px;
}
.small {
  line-height: 80px;
}
.small .num {
  font-size: 68px;
}
.row + .row {
  margin-top: 52px;
}
.watermark {
  display: flex;
  align-items: center;
  justify-content: flex-end;
  gap: 6px;
  padding: 4px 12px 8px 0;
  font-family: "Liberation Sans", "Noto Sans CJK SC", sans-serif;
  font-size: 35px;
  line-height: 46px;
  color: #fff;
  text-shadow: 0 0 4px rgba(0, 0, 0, 0.5);
}
.watermark svg {
  filter: drop-shadow(0 0 2px rgba(0, 0, 0, 0.4));
}
```
